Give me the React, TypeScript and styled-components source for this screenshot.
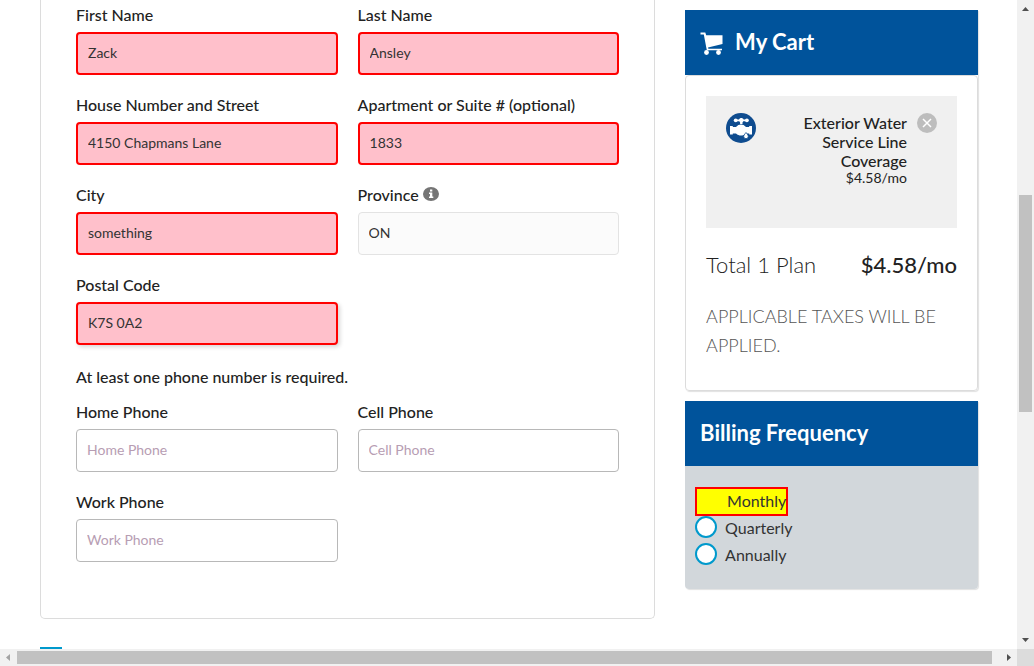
import React from "react";
import styled, { createGlobalStyle } from "styled-components";

const GlobalStyle = createGlobalStyle`
  * { box-sizing: border-box; }
  body {
    margin: 0;
    background: #fff;
    color: #222;
    font-family: Lato, "Open Sans", sans-serif;
    font-size: 16px;
    line-height: 24px;
  }
`;

const Viewport = styled.div`
  display: grid;
  grid-template-columns: minmax(0, 1fr) 17px;
  grid-template-rows: minmax(0, 1fr) 17px;
  height: 100vh;
`;

const Content = styled.div`
  display: grid;
  grid-template-columns: minmax(0, 21fr) minmax(0, 10fr);
  column-gap: 30px;
  align-items: start;
  padding: 0 39px 0 40px;
  overflow: hidden;
`;

const FormCard = styled.form`
  padding: 3px 35px 56px;
  border: 1px solid #dcdcdc;
  border-top: 0;
  border-radius: 0 0 5px 5px;
`;

const FieldGrid = styled.div`
  display: grid;
  grid-template-columns: 1fr 1fr;
  gap: 18px 20px;
`;

const FieldBox = styled.div`
  display: flex;
  flex-direction: column;
  gap: 5px;
`;

const LabelRow = styled.div`
  display: flex;
  align-items: center;
  gap: 4px;
`;

const Label = styled.label`
  font-weight: 500;
`;

type Tone = "invalid" | "locked" | "plain";

const TextInput = styled.input<{ $tone: Tone; $raised?: boolean }>`
  width: 100%;
  height: 43px;
  padding: 0 10px 2px;
  border: ${(p) =>
    p.$tone === "invalid" ? "2px solid #f00" : p.$tone === "locked" ? "1px solid #e3e3e3" : "1px solid #b8b8b8"};
  border-radius: 4px;
  background: ${(p) => (p.$tone === "invalid" ? "#ffc0cb" : p.$tone === "locked" ? "#fbfbfb" : "#fff")};
  box-shadow: ${(p) => (p.$raised ? "2px 2px 4px rgba(0, 0, 0, 0.16)" : "none")};
  color: #333;
  font: inherit;
  font-size: 14px;
  outline: 0;
  &::placeholder {
    color: #b79db3;
    opacity: 1;
  }
`;

const Notice = styled.p`
  margin: 20px 0 11px;
  font-weight: 500;
`;

const Consent = styled.input`
  appearance: none;
  display: block;
  width: 22px;
  height: 22px;
  margin: 28px 0 0;
  border: 2px solid #09c;
  background: #fff;
`;

const Sidebar = styled.aside`
  display: flex;
  flex-direction: column;
  gap: 10px;
  padding-top: 10px;
`;

const Panel = styled.section`
  border-radius: 0 0 4px 4px;
  box-shadow: 1px 1px 1px rgba(0, 0, 0, 0.12);
`;

const PanelHead = styled.h2`
  display: flex;
  align-items: center;
  gap: 12px;
  height: 65px;
  margin: 0;
  padding: 0 15px 2px;
  background: #00539b;
  color: #fff;
  font-size: 22px;
  font-weight: 700;
`;

const CartBody = styled.div`
  padding: 20px 20px 30px;
  border: 1px solid #dcdcdc;
  border-radius: 4px;
`;

const CartItem = styled.div`
  display: flex;
  align-items: flex-start;
  min-height: 132px;
  padding: 17px 20px;
  background: #f0f0f0;
`;

const ItemText = styled.div`
  flex: 1;
  padding-left: 40px;
  text-align: right;
`;

const ItemName = styled.div`
  font-weight: 500;
  line-height: 19px;
`;

const ItemPrice = styled.div`
  font-size: 14px;
  line-height: 16px;
`;

const RemoveButton = styled.button`
  display: flex;
  width: 20px;
  height: 20px;
  margin-left: 10px;
  padding: 0;
  border: 0;
  border-radius: 50%;
  background: #bdbdbd;
`;

const TotalRow = styled.div`
  display: flex;
  justify-content: space-between;
  margin: 25px 0;
  font-size: 22px;
  font-weight: 300;
`;

const Amount = styled.span`
  font-weight: 500;
`;

const TaxNote = styled.p`
  margin: 0;
  color: #555;
  font-size: 18px;
  font-weight: 300;
  line-height: 29px;
`;

const BillingBody = styled.div`
  display: flex;
  flex-direction: column;
  align-items: flex-start;
  padding: 21px 10px 19px;
  border-radius: 0 0 4px 4px;
  background: #d2d7db;
`;

const Choice = styled.label<{ $marked?: boolean }>`
  display: flex;
  align-items: flex-start;
  gap: 8px;
  height: ${(p) => (p.$marked ? "29px" : "27px")};
  border: ${(p) => (p.$marked ? "2px solid #f00" : "0")};
  background: ${(p) => (p.$marked ? "#ff0" : "transparent")};
  color: #333;
`;

const Radio = styled.input<{ $hidden?: boolean }>`
  appearance: none;
  width: 22px;
  height: 22px;
  margin: 0;
  border: 2px solid #09c;
  border-radius: 50%;
  background: #fff;
  opacity: ${(p) => (p.$hidden ? 0 : 1)};
`;

const Bar = styled.div<{ $vertical?: boolean }>`
  display: flex;
  flex-direction: ${(p) => (p.$vertical ? "column" : "row")};
  background: #f1f1f1;
`;

const Arrow = styled.svg`
  flex: none;
  width: 17px;
  height: 17px;
`;

const Track = styled.div<{ $vertical?: boolean }>`
  display: flex;
  flex: 1;
  flex-direction: ${(p) => (p.$vertical ? "column" : "row")};
  padding: ${(p) => (p.$vertical ? "0 2px" : "2px 0")};
`;

const Thumb = styled.div`
  flex: none;
  background: #c1c1c1;
`;

const VerticalThumb = styled(Thumb)`
  height: 35.3%;
`;

const VerticalLead = styled.div`
  height: 29%;
`;

const HorizontalThumb = styled(Thumb)`
  width: 99.2%;
`;

const Corner = styled.div`
  background: #dcdcdc;
`;

const CartIcon = () => (
  <svg width="23" height="29" viewBox="-.5 -5.500 23 29" fill="#fff" aria-hidden="true">
    <path d="M0 0h4.800l.9 2.700H22v8.800L7.500 15l.4 1.200H21.500v1.600H6.300L3.300 2H0z" />
    <circle cx="6" cy="20" r="2.400" />
    <circle cx="18" cy="20" r="2.400" />
  </svg>
);

const ValveIcon = () => (
  <svg width="30" height="30" viewBox="0 0 30 30" fill="#fff" aria-hidden="true">
    <circle cx="15" cy="15" r="15" fill="#0f4c8f" />
    <circle cx="9.700" cy="7.300" r="1.900" />
    <circle cx="20.900" cy="7.300" r="1.900" />
    <path d="M9.500 6.500h3.500c.5-1 1.300-1.500 2.300-1.500s1.800.5 2.300 1.500h3.500v1.700h-3.800l-.8 1.200V11h-2.400V9.400l-.8-1.200H9.500z" />
    <path d="M4 13h2.800v1H10c1.500-1.700 3.200-2.500 5-2.500s3.500.8 5 2.500h3.200v-1H26v8.500h-2.800v-1H20c-1.500 1.400-3.200 2-5 2s-3.500-.6-5-2H6.800v1H4z" />
    <path d="M20 19.500c1.500 1.900 2.300 3 2.300 3.900a2.300 2.300 0 0 1-4.600 0c0-.9.800-2 2.300-3.900z" stroke="#0f4c8f" strokeWidth=".8" />
  </svg>
);

const InfoIcon = () => (
  <svg width="16" height="17" viewBox="0 0 16 17" aria-hidden="true">
    <ellipse cx="8" cy="7" rx="8" ry="7" fill="#757575" />
    <path d="M7 2.500h2.300v2H7zM6 5.500h3.300v4h1V11H6V9.500h1V7H6z" fill="#fff" />
  </svg>
);

type FieldProps = { id: string; label: string; value?: string; tone?: Tone; raised?: boolean; info?: boolean };

const Field = ({ id, label, value, tone = "invalid", raised, info }: FieldProps) => (
  <FieldBox>
    <LabelRow>
      <Label htmlFor={id}>{label}</Label>
      {info && <InfoIcon />}
    </LabelRow>
    <TextInput
      id={id}
      $tone={tone}
      $raised={raised}
      defaultValue={value}
      placeholder={value ? undefined : label}
      readOnly={tone === "locked"}
    />
  </FieldBox>
);

export default function App() {
  return (
    <>
      <GlobalStyle />
      <Viewport>
        <Content>
          <main>
            <FormCard>
              <FieldGrid>
                <Field id="first" label="First Name" value="Zack" />
                <Field id="last" label="Last Name" value="Ansley" />
                <Field id="street" label="House Number and Street" value="4150 Chapmans Lane" />
                <Field id="suite" label="Apartment or Suite # (optional)" value="1833" />
                <Field id="city" label="City" value="something" />
                <Field id="province" label="Province" value="ON" tone="locked" info />
                <Field id="postal" label="Postal Code" value="K7S 0A2" raised />
              </FieldGrid>
              <Notice>At least one phone number is required.</Notice>
              <FieldGrid>
                <Field id="home" label="Home Phone" tone="plain" />
                <Field id="cell" label="Cell Phone" tone="plain" />
                <Field id="work" label="Work Phone" tone="plain" />
              </FieldGrid>
            </FormCard>
            <Consent type="checkbox" aria-label="Consent" />
          </main>
          <Sidebar>
            <Panel>
              <PanelHead>
                <CartIcon />
                My Cart
              </PanelHead>
              <CartBody>
                <CartItem>
                  <ValveIcon />
                  <ItemText>
                    <ItemName>Exterior Water Service Line Coverage</ItemName>
                    <ItemPrice>$4.58/mo</ItemPrice>
                  </ItemText>
                  <RemoveButton type="button" aria-label="Remove">
                    <svg width="20" height="20" viewBox="0 0 20 20" aria-hidden="true">
                      <path d="M6 6l8 8M14 6l-8 8" stroke="#fff" strokeWidth="1.500" />
                    </svg>
                  </RemoveButton>
                </CartItem>
                <TotalRow>
                  <span>Total 1 Plan</span>
                  <Amount>$4.58/mo</Amount>
                </TotalRow>
                <TaxNote>APPLICABLE TAXES WILL BE APPLIED.</TaxNote>
              </CartBody>
            </Panel>
            <Panel>
              <PanelHead>Billing Frequency</PanelHead>
              <BillingBody>
                <Choice $marked>
                  <Radio type="radio" name="billing" defaultChecked $hidden />
                  Monthly
                </Choice>
                <Choice>
                  <Radio type="radio" name="billing" />
                  Quarterly
                </Choice>
                <Choice>
                  <Radio type="radio" name="billing" />
                  Annually
                </Choice>
              </BillingBody>
            </Panel>
          </Sidebar>
        </Content>
        <Bar $vertical>
          <Arrow viewBox="0 0 17 17"><path d="M5 11h7L8.500 7z" fill="#505050" /></Arrow>
          <Track $vertical>
            <VerticalLead />
            <VerticalThumb />
          </Track>
          <Arrow viewBox="0 0 17 17"><path d="M5 6h7L8.500 10z" fill="#505050" /></Arrow>
        </Bar>
        <Bar>
          <Arrow viewBox="0 0 17 17"><path d="M10 5v7L6 8.500z" fill="#a3a3a3" /></Arrow>
          <Track>
            <HorizontalThumb />
          </Track>
          <Arrow viewBox="0 0 17 17"><path d="M7 5v7l4-3.500z" fill="#505050" /></Arrow>
        </Bar>
        <Corner />
      </Viewport>
    </>
  );
}
